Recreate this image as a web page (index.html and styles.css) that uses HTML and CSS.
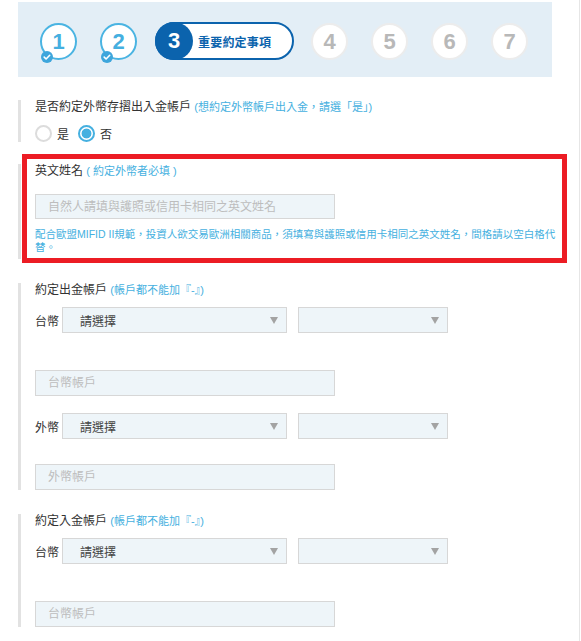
FILE: index.html
```html
<!DOCTYPE html>
<html lang="zh-Hant">
<head>
<meta charset="utf-8">
<title>約定帳戶</title>
<link rel="stylesheet" href="styles.css">
</head>
<body>
<div class="page">

  <div class="steps">
    <div class="step done">1<span class="check"><svg viewBox="0 0 12 12" width="12" height="12"><circle cx="6" cy="6" r="6" fill="#3ea6dc"/><path d="M3.2 6.1l1.9 1.9 3.6-3.7" stroke="#fff" stroke-width="1.6" fill="none" stroke-linecap="round" stroke-linejoin="round"/></svg></span></div>
    <div class="step done">2<span class="check"><svg viewBox="0 0 12 12" width="12" height="12"><circle cx="6" cy="6" r="6" fill="#3ea6dc"/><path d="M3.2 6.1l1.9 1.9 3.6-3.7" stroke="#fff" stroke-width="1.6" fill="none" stroke-linecap="round" stroke-linejoin="round"/></svg></span></div>
    <div class="step-current"><span class="num">3</span><span class="step-name">重要約定事項</span></div>
    <div class="step">4</div>
    <div class="step">5</div>
    <div class="step">6</div>
    <div class="step">7</div>
  </div>

  <div class="section first">
    <div class="label">是否約定外幣存摺出入金帳戶 <span class="hint">(想約定外幣帳戶出入金，請選「是」)</span></div>
    <div class="radio-row">
      <label class="radio"><span class="dot"></span>是</label>
      <label class="radio checked"><span class="dot"></span>否</label>
    </div>
  </div>

  <div class="section name-section">
    <div class="highlight"></div>
    <div class="label">英文姓名 <span class="hint">( 約定外幣者必填 )</span></div>
    <input class="text-input name-input" type="text" placeholder="自然人請填與護照或信用卡相同之英文姓名">
    <p class="note">配合歐盟MIFID II規範，投資人欲交易歐洲相關商品，須填寫與護照或信用卡相同之英文姓名，間格請以空白格代替。</p>
  </div>

  <div class="section">
    <div class="label">約定出金帳戶 <span class="hint">(帳戶都不能加『-』)</span></div>
    <div class="currency-row">
      <span class="cur-label">台幣</span>
      <div class="select wide">請選擇</div>
      <div class="select narrow"></div>
    </div>
    <input class="text-input after-select" type="text" placeholder="台幣帳戶">
    <div class="currency-row second">
      <span class="cur-label">外幣</span>
      <div class="select wide">請選擇</div>
      <div class="select narrow"></div>
    </div>
    <input class="text-input after-second" type="text" placeholder="外幣帳戶">
  </div>

  <div class="section">
    <div class="label">約定入金帳戶 <span class="hint">(帳戶都不能加『-』)</span></div>
    <div class="currency-row">
      <span class="cur-label">台幣</span>
      <div class="select wide">請選擇</div>
      <div class="select narrow"></div>
    </div>
    <input class="text-input after-select" type="text" placeholder="台幣帳戶">
  </div>

</div>
</body>
</html>
```

FILE: styles.css
```css
body {
  margin: 0;
  font-family: "Liberation Sans", "Noto Sans CJK TC", sans-serif;
  color: #333;
  background: #fff;
}
.page {
  width: 580px;
  min-height: 100vh;
  border-right: 1px solid #e6e6e6;
  padding-top: 2px;
  box-sizing: border-box;
}

/* step bar */
.steps {
  margin-left: 18px;
  width: 534px;
  height: 75px;
  background-color: #e3eef6;
  display: flex;
  align-items: center;
  gap: 23px;
  padding: 3px 0 0 22px;
  box-sizing: border-box;
}
.step {
  position: relative;
  width: 37px;
  height: 37px;
  box-sizing: border-box;
  border-radius: 50%;
  border: 2px solid #ececec;
  background-color: #fff;
  color: #b8b8b8;
  font-weight: bold;
  font-size: 22px;
  line-height: 33px;
  text-align: center;
  flex-shrink: 0;
}
.step.done {
  border-color: #4ab4e2;
  color: #45afe0;
}
.check {
  position: absolute;
  left: -1px;
  top: 26px;
  width: 12px;
  height: 12px;
  line-height: 0;
}
.step-current {
  display: flex;
  align-items: center;
  width: 139px;
  height: 38px;
  box-sizing: border-box;
  border: 2px solid #0b63ad;
  border-radius: 19px;
  background-color: #fff;
  margin: 0 -6px 0 -5px;
  flex-shrink: 0;
}
.step-current .num {
  width: 38px;
  height: 38px;
  margin-left: -2px;
  border-radius: 50%;
  background-color: #0b63ad;
  color: #fff;
  font-weight: bold;
  font-size: 22px;
  line-height: 38px;
  text-align: center;
}
.step-name {
  margin-left: 5px;
  font-size: 12px;
  font-weight: bold;
  color: #0b63ad;
  letter-spacing: 0.2px;
}

/* form sections */
.section {
  position: relative;
  margin: 24px 20px 0 18px;
  border-left: 3px solid #e2e2e2;
  padding-left: 14px;
}
.section.first {
  margin-top: 23px;
}
.name-section {
  margin-top: 22px;
  padding-bottom: 5px;
}
.label {
  font-size: 12px;
  line-height: 14px;
  color: #333;
  white-space: nowrap;
}
.hint {
  font-size: 11px;
  color: #45b0e0;
}

.radio-row {
  display: flex;
  margin-top: 10px;
  height: 18px;
  align-items: center;
}
.radio {
  display: flex;
  align-items: center;
  font-size: 12px;
  margin-right: 9px;
}
.radio .dot {
  width: 17px;
  height: 17px;
  box-sizing: border-box;
  border: 2px solid #dcdcdc;
  border-radius: 50%;
  margin-right: 5px;
  background-color: #fff;
}
.radio.checked .dot {
  border-color: #45b0e0;
  background: radial-gradient(circle, #45b0e0 0, #45b0e0 4.5px, #fff 5.3px);
}

.text-input {
  display: block;
  width: 300px;
  height: 26px;
  box-sizing: border-box;
  margin: 0;
  border: 1px solid #d7d7d7;
  background-color: #eef5f9;
  padding: 0 12px;
  font-family: "Liberation Sans", "Noto Sans CJK TC", sans-serif;
  font-size: 12px;
  color: #333;
  outline: none;
}
.text-input::placeholder {
  color: #bdbdbd;
}
.name-input {
  margin-top: 16px;
  height: 25px;
}
.note {
  margin: 9px 0 0 0;
  font-size: 10.5px;
  line-height: 13px;
  color: #45b0e0;
}

.highlight {
  position: absolute;
  left: 1px;
  top: -10px;
  width: 545px;
  height: 109px;
  box-sizing: border-box;
  border: 5px solid #ec1c24;
  pointer-events: none;
}

.currency-row {
  display: flex;
  align-items: center;
  margin-top: 10px;
}
.currency-row.second {
  margin-top: 17px;
}
.cur-label {
  width: 24px;
  margin-right: 3px;
  font-size: 12px;
  color: #333;
  white-space: nowrap;
}
.select {
  height: 26px;
  box-sizing: border-box;
  border: 1px solid #d7d7d7;
  background-color: #eef5f9;
  display: flex;
  align-items: center;
  padding: 0 8px 0 17px;
  font-size: 12px;
  color: #444;
}
.select::after {
  content: "";
  margin-left: auto;
  border-left: 4px solid transparent;
  border-right: 4px solid transparent;
  border-top: 7px solid #a3a3a3;
}
.select.wide {
  width: 225px;
}
.select.narrow {
  width: 150px;
  margin-left: 11px;
}
.after-select {
  margin-top: 37px;
}
.after-second {
  margin-top: 25px;
}
```
